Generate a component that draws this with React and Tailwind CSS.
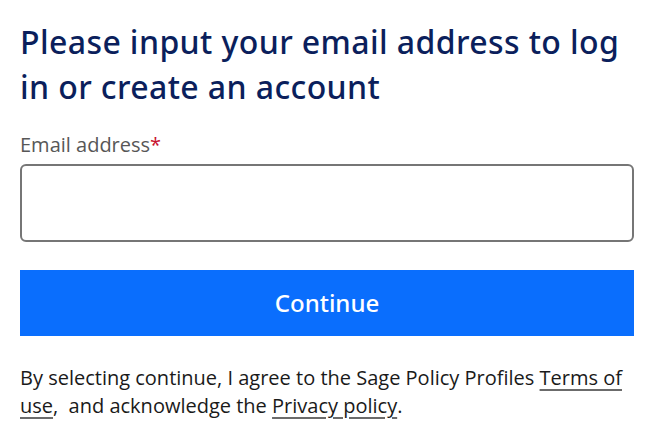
import React, { useState } from "react";

const App = () => {
  const [email, setEmail] = useState("");

  return (
    <div className="min-h-screen bg-white px-5 pt-[19px]">
      <h1 className="font-['Noto_Sans',sans-serif] text-[32px] leading-[45px] font-medium tracking-[0.4px] text-[#0b1f5c]">
        Please input your email address to log in or create an account
      </h1>

      <form
        className="mt-[22px] flex flex-col"
        onSubmit={(e) => e.preventDefault()}
      >
        <label
          htmlFor="email"
          className="font-['Open_Sans',sans-serif] text-[20px] leading-[28px] text-[#575757]"
        >
          Email address<span className="text-[#c8102e]">*</span>
        </label>
        <input
          id="email"
          type="email"
          value={email}
          onChange={(e) => setEmail(e.target.value)}
          className="mt-[5px] h-[78px] w-full rounded-[6px] border-2 border-[#767676] bg-white px-4 text-[20px] outline-none"
        />

        <button
          type="submit"
          className="mt-[28px] h-[66px] w-full bg-[#0a6efd] font-['Noto_Sans',sans-serif] text-[24px] font-medium text-white"
        >
          Continue
        </button>
      </form>

      <p className="mt-[28px] font-['Open_Sans',sans-serif] text-[20px] leading-[28px] text-[#1a1a1a]">
        By selecting continue, I agree to the Sage Policy Profiles{" "}
        <a href="#" className="underline decoration-[#6b6b6b] underline-offset-[4px]">
          Terms of use
        </a>
        ,&nbsp; and acknowledge the{" "}
        <a href="#" className="underline decoration-[#6b6b6b] underline-offset-[4px]">
          Privacy policy
        </a>
        .
      </p>
    </div>
  );
};

export default App;
